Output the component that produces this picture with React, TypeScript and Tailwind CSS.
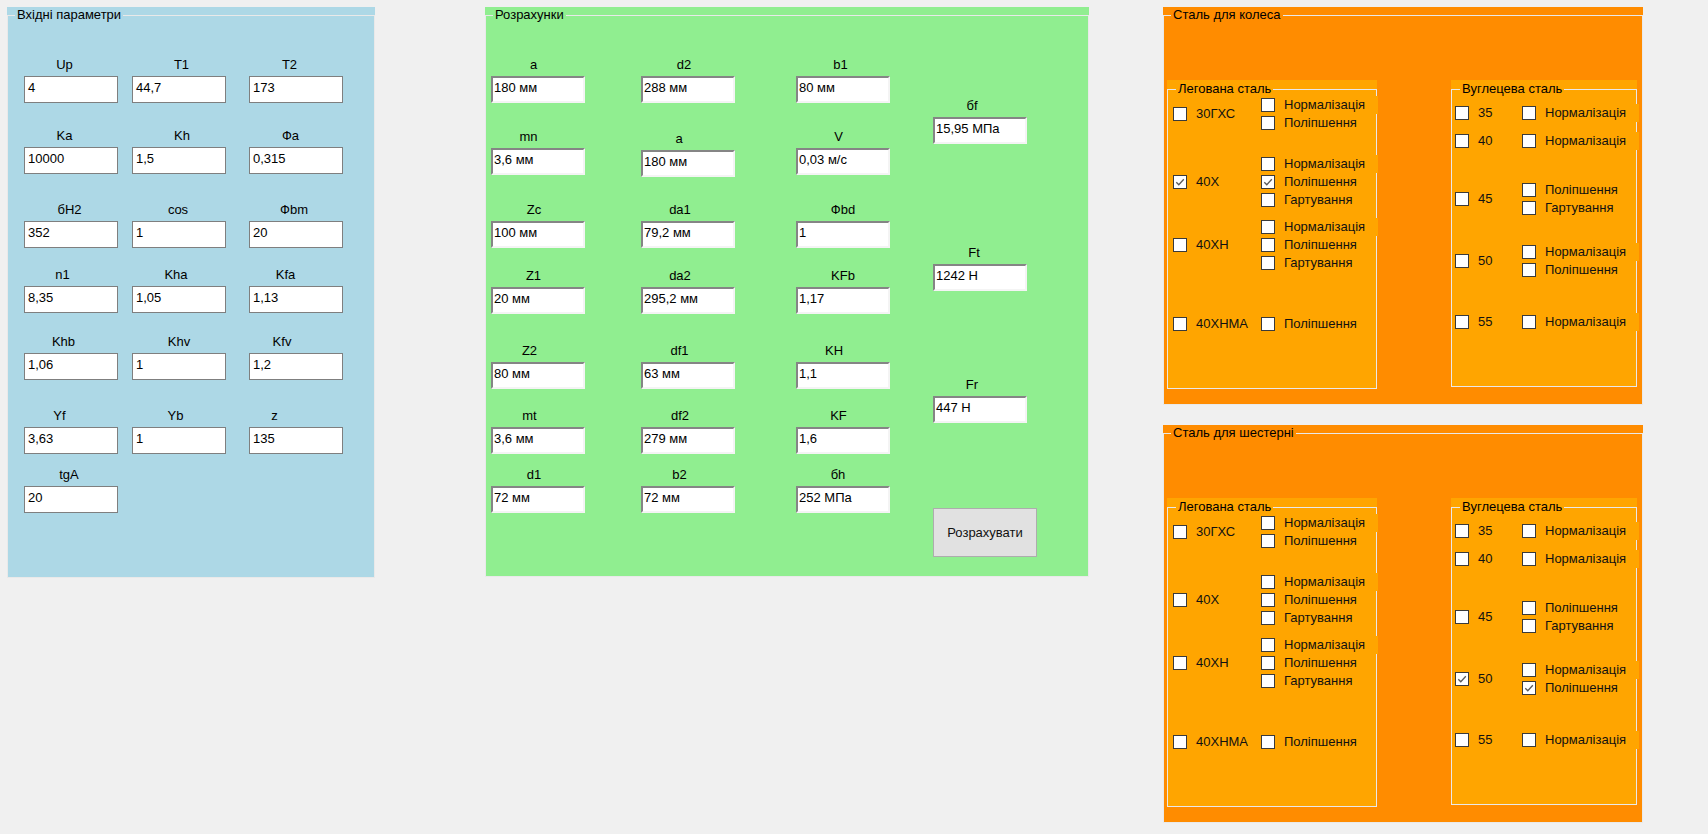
import React from "react";

type F = { label: string; value: string; shift: string; extra?: string };
type Row = { mt: string; fields: F[] };

const blueRows: Row[] = [
  { mt: "mt-[34px]", fields: [
    { label: "Up", value: "4", shift: "pr-[13px]" },
    { label: "T1", value: "44,7", shift: "pl-[5px]" },
    { label: "T2", value: "173", shift: "pr-[13px]" } ] },
  { mt: "mt-[25px]", fields: [
    { label: "Ka", value: "10000", shift: "pr-[13px]" },
    { label: "Kh", value: "1,5", shift: "pl-[6px]" },
    { label: "Фa", value: "0,315", shift: "pr-[11px]" } ] },
  { mt: "mt-[28px]", fields: [
    { label: "бH2", value: "352", shift: "pr-[3px]" },
    { label: "cos", value: "1", shift: "pr-[2px]" },
    { label: "Фbm", value: "20", shift: "pr-[4px]" } ] },
  { mt: "mt-[19px]", fields: [
    { label: "n1", value: "8,35", shift: "pr-[17px]" },
    { label: "Kha", value: "1,05", shift: "pr-[6px]" },
    { label: "Kfa", value: "1,13", shift: "pr-[21px]" } ] },
  { mt: "mt-[21px]", fields: [
    { label: "Khb", value: "1,06", shift: "pr-[15px]" },
    { label: "Khv", value: "1", shift: "pr-[0px]" },
    { label: "Kfv", value: "1,2", shift: "pr-[28px]" } ] },
  { mt: "mt-[28px]", fields: [
    { label: "Yf", value: "3,63", shift: "pr-[23px]" },
    { label: "Yb", value: "1", shift: "pr-[7px]" },
    { label: "z", value: "135", shift: "pr-[43px]" } ] },
  { mt: "mt-[13px]", fields: [
    { label: "tgA", value: "20", shift: "pr-[4px]" } ] },
];

const greenRows: Row[] = [
  { mt: "mt-[34px]", fields: [
    { label: "a", value: "180 мм", shift: "pr-[9px]" },
    { label: "d2", value: "288 мм", shift: "pr-[8px]" },
    { label: "b1", value: "80 мм", shift: "pr-[5px]" } ] },
  { mt: "mt-[26px]", fields: [
    { label: "mn", value: "3,6 мм", shift: "pr-[19px]" },
    { label: "a", value: "180 мм", shift: "pr-[18px]", extra: "mt-[2px]" },
    { label: "V", value: "0,03 м/с", shift: "pr-[9px]" } ] },
  { mt: "mt-[25px]", fields: [
    { label: "Zc", value: "100 мм", shift: "pr-[8px]" },
    { label: "da1", value: "79,2 мм", shift: "pr-[16px]" },
    { label: "Фbd", value: "1", shift: "pr-[0px]" } ] },
  { mt: "mt-[20px]", fields: [
    { label: "Z1", value: "20 мм", shift: "pr-[9px]" },
    { label: "da2", value: "295,2 мм", shift: "pr-[16px]" },
    { label: "KFb", value: "1,17", shift: "pr-[0px]" } ] },
  { mt: "mt-[29px]", fields: [
    { label: "Z2", value: "80 мм", shift: "pr-[17px]" },
    { label: "df1", value: "63 мм", shift: "pr-[17px]" },
    { label: "KH", value: "1,1", shift: "pr-[18px]" } ] },
  { mt: "mt-[19px]", fields: [
    { label: "mt", value: "3,6 мм", shift: "pr-[17px]" },
    { label: "df2", value: "279 мм", shift: "pr-[16px]" },
    { label: "KF", value: "1,6", shift: "pr-[9px]" } ] },
  { mt: "mt-[13px]", fields: [
    { label: "d1", value: "72 мм", shift: "pr-[8px]" },
    { label: "b2", value: "72 мм", shift: "pr-[17px]" },
    { label: "бh", value: "252 МПа", shift: "pr-[10px]" } ] },
];

const blueCols = ["ml-[16px]", "ml-[14px]", "ml-[23px]"];
const greenCols = ["ml-[5px]", "ml-[56px]", "ml-[61px]"];

function Field({ f, ml, sunken }: { f: F; ml: string; sunken: boolean }) {
  const box = sunken
    ? "border-2 border-t-[#858585] border-l-[#858585] border-b-[#f4f4f4] border-r-[#f4f4f4] pl-[1px] pt-[2px]"
    : "border border-[#7f7f7f] pl-[3px] pt-[3px]";
  return (
    <div className={`${ml} ${f.extra ?? ""} w-[94px] shrink-0`}>
      <div className={`h-[15px] whitespace-nowrap text-center leading-[15px] ${f.shift}`}>{f.label}</div>
      <div className={`mt-[4px] h-[27px] whitespace-nowrap bg-white leading-[15px] ${box}`}>{f.value}</div>
    </div>
  );
}

function Rows({ rows, cols, sunken }: { rows: Row[]; cols: string[]; sunken: boolean }) {
  return (
    <div className="flex flex-col">
      {rows.map((r, i) => (
        <div key={i} className={`flex items-start ${r.mt}`}>
          {r.fields.map((f, j) => (
            <Field key={j} f={f} ml={cols[j]} sunken={sunken} />
          ))}
        </div>
      ))}
    </div>
  );
}

function Group({
  title,
  bg,
  size,
  legendH,
  children,
}: {
  title: string;
  bg: string;
  size: string;
  legendH: string;
  children: React.ReactNode;
}) {
  return (
    <div className={`${bg} ${size} shrink-0`}>
      <fieldset className="h-full min-w-0 border border-[#e9e9e9]">
        <legend className={`ml-[7px] px-[2px] whitespace-nowrap ${legendH}`}>{title}</legend>
        {children}
      </fieldset>
    </div>
  );
}

function Box({ checked }: { checked?: boolean }) {
  return (
    <span className="flex h-[14px] w-[14px] shrink-0 items-center justify-center border border-[#3a3a3a] bg-white">
      {checked && (
        <svg width="12" height="12" viewBox="0 0 12 12">
          <path d="M2.3 6.2 L4.8 8.7 L9.8 3.2" fill="none" stroke="#5a5a5a" strokeWidth="1.3" />
        </svg>
      )}
    </span>
  );
}

type C = { text: string; checked?: boolean; wide?: boolean };

function Check({ c }: { c: C }) {
  return (
    <div className={`flex h-[18px] items-center ${c.wide ? "w-[117px] bg-[#FFA500]" : ""}`}>
      <Box checked={c.checked} />
      <span className="ml-[9px] whitespace-nowrap leading-[18px] text-[#111]">{c.text}</span>
    </div>
  );
}

type SRow = { mt: string; left: C; right: C[] };

function SteelRows({ rows, leftW, pl }: { rows: SRow[]; leftW: string; pl: string }) {
  return (
    <div className={`flex flex-col ${pl}`}>
      {rows.map((r, i) => (
        <div key={i} className={`flex items-center ${r.mt}`}>
          <div className={`${leftW} shrink-0`}>
            <Check c={r.left} />
          </div>
          <div className="flex flex-col">
            {r.right.map((c, j) => (
              <Check key={j} c={c} />
            ))}
          </div>
        </div>
      ))}
    </div>
  );
}

const N = "Нормалізація";
const P = "Поліпшення";
const G = "Гартування";

function SteelPanel({ title, alloy40x, carbon50 }: { title: string; alloy40x: boolean; carbon50: boolean }) {
  const alloy: SRow[] = [
    { mt: "mt-[-2px]", left: { text: "30ГХС" }, right: [{ text: N, wide: true }, { text: P }] },
    { mt: "mt-[23px]", left: { text: "40Х", checked: alloy40x }, right: [{ text: N, wide: true }, { text: P, checked: alloy40x }, { text: G }] },
    { mt: "mt-[9px]", left: { text: "40ХН" }, right: [{ text: N, wide: true }, { text: P }, { text: G }] },
    { mt: "mt-[43px]", left: { text: "40ХНМА" }, right: [{ text: P }] },
  ];
  const carbon: SRow[] = [
    { mt: "mt-[6px]", left: { text: "35" }, right: [{ text: N, wide: true }] },
    { mt: "mt-[10px]", left: { text: "40" }, right: [{ text: N, wide: true }] },
    { mt: "mt-[31px]", left: { text: "45" }, right: [{ text: P }, { text: G }] },
    { mt: "mt-[26px]", left: { text: "50", checked: carbon50 }, right: [{ text: N, wide: true }, { text: P, checked: carbon50 }] },
    { mt: "mt-[34px]", left: { text: "55" }, right: [{ text: N, wide: true }] },
  ];
  return (
    <Group title={title} bg="bg-[#FF8C00]" size="w-[480px] h-[398px]" legendH="h-[16px] leading-[16px]">
      <div className="ml-[3px] mt-[57px] flex items-start">
        <Group title="Легована сталь" bg="bg-[#FFA500]" size="w-[210px] h-[309px]" legendH="ml-[8px] h-[18px] leading-[18px]">
          <SteelRows rows={alloy} leftW="w-[88px]" pl="pl-[5px]" />
        </Group>
        <div className="ml-[74px]">
          <Group title="Вуглецева сталь" bg="bg-[#FFA500]" size="w-[186px] h-[307px]" legendH="ml-[8px] h-[18px] leading-[18px]">
            <SteelRows rows={carbon} leftW="w-[67px]" pl="pl-[3px]" />
          </Group>
        </div>
      </div>
    </Group>
  );
}

function Col4Field({ label, value, shift, mt }: { label: string; value: string; shift: string; mt: string }) {
  return <div className={mt}><Field f={{ label, value, shift }} ml="" sunken={true} /></div>;
}

export default function App() {
  return (
    <div className="flex h-[834px] w-[1708px] items-start overflow-hidden bg-[#F0F0F0] pl-[7px] pt-[7px] font-['Liberation_Sans',Arial,sans-serif] text-[13px] text-black">
      <Group title="Вхідні параметри" bg="bg-[#ADD8E6]" size="w-[368px] h-[571px]" legendH="h-[16px] leading-[16px]">
        <Rows rows={blueRows} cols={blueCols} sunken={false} />
      </Group>

      <div className="ml-[110px]">
        <Group title="Розрахунки" bg="bg-[#90EE90]" size="w-[604px] h-[570px]" legendH="h-[16px] leading-[16px]">
          <div className="flex items-start">
            <Rows rows={greenRows} cols={greenCols} sunken={true} />
            <div className="ml-[43px] flex flex-col">
              <Col4Field label="бf" value="15,95 МПа" shift="pr-[16px]" mt="mt-[75px]" />
              <Col4Field label="Ft" value="1242 Н" shift="pr-[12px]" mt="mt-[101px]" />
              <Col4Field label="Fr" value="447 Н" shift="pr-[16px]" mt="mt-[86px]" />
              <button className="mt-[85px] h-[49px] w-[104px] border border-[#ADADAD] bg-[#E1E1E1] text-[13px] text-[#111]">
                Розрахувати
              </button>
            </div>
          </div>
        </Group>
      </div>

      <div className="ml-[74px] flex flex-col gap-[20px]">
        <SteelPanel title="Сталь для колеса" alloy40x={true} carbon50={false} />
        <SteelPanel title="Сталь для шестерні" alloy40x={false} carbon50={true} />
      </div>
    </div>
  );
}
